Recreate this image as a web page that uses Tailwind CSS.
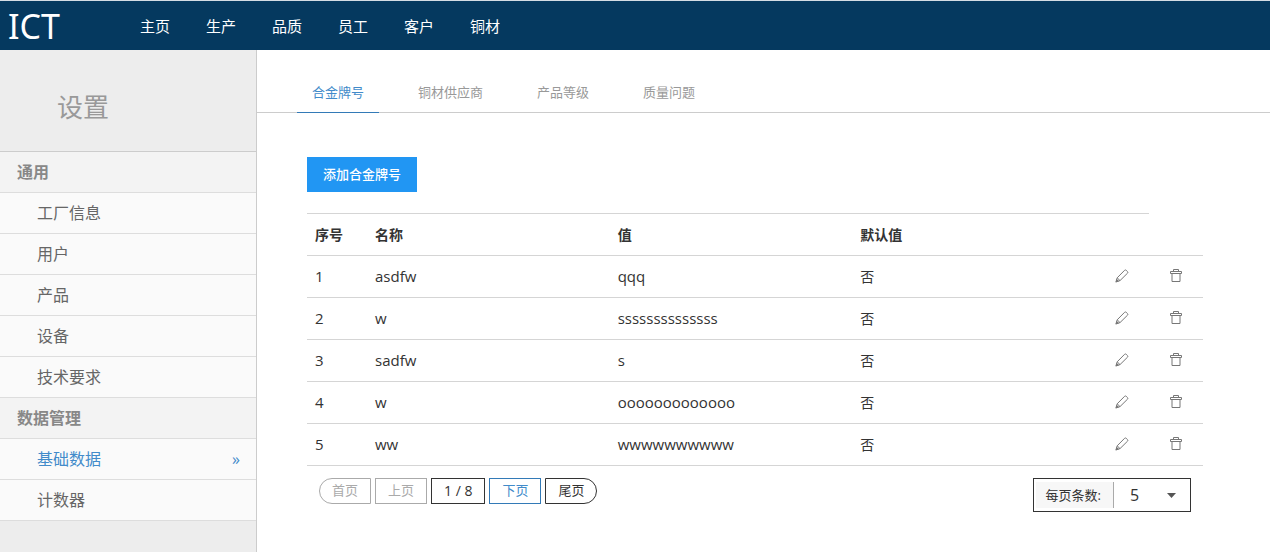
<!DOCTYPE html>
<html lang="zh-CN">
<head>
<meta charset="utf-8">
<meta name="viewport" content="width=device-width, initial-scale=1">
<title>ICT 设置</title>
<script src="https://cdn.jsdelivr.net/npm/@tailwindcss/browser@4"></script>
</head>
<body class="flex min-h-screen flex-col bg-white font-['Open_Sans','Noto_Sans_CJK_SC',sans-serif] text-[#333]">
<svg class="hidden" aria-hidden="true">
  <symbol id="pencil" viewBox="0 0 14 14" fill="none" stroke="currentColor">
    <path d="M2.2 8.8 9.6 1.3Q10.4.6 11.2 1.3L12.5 2.6Q13.2 3.4 12.5 4.2L5 11.6M2.2 8.8 5 11.6M2.2 8.8 1 12.9 5 11.6"/>
    <path d="M1.5 9.800 4 12.300.5 13.500z" fill="currentColor" stroke="none"/>
  </symbol>
  <symbol id="trash" viewBox="0 0 12 14" fill="none" stroke="currentColor">
    <path d="M3.5 2.500v-2h5v2M.5 2.500h11v2H.5zM2 4.500v8h8v-8"/>
  </symbol>
</svg>

<header class="flex h-[50px] shrink-0 items-center border-t border-[#d5dde4] bg-[#05395f] text-white">
  <a href="#" class="w-[124px] pl-2 font-['Noto_Sans',sans-serif] text-[34px] leading-[48px]">ICT</a>
  <nav class="flex text-[15px] leading-6">
    <a href="#" class="w-[66px] pl-4">主页</a>
    <a href="#" class="w-[66px] pl-4">生产</a>
    <a href="#" class="w-[66px] pl-4">品质</a>
    <a href="#" class="w-[66px] pl-4">员工</a>
    <a href="#" class="w-[66px] pl-4">客户</a>
    <a href="#" class="w-[66px] pl-4">铜材</a>
  </nav>
</header>

<div class="flex grow">
  <aside class="w-[257px] shrink-0 border-r border-[#ccc] bg-[#ededed]">
    <h1 class="border-b border-[#ccc] pt-[37px] pb-6 pl-[57px] text-[26px] leading-10 text-[#999]">设置</h1>
    <nav class="text-base leading-10 text-[#666]">
      <h2 class="border-b border-[#ddd] bg-[#f3f3f3] pl-[17px] font-bold text-[#888]">通用</h2>
      <a href="#" class="block border-b border-[#ddd] bg-[#fafafa] pl-[37px]">工厂信息</a>
      <a href="#" class="block border-b border-[#ddd] bg-[#fafafa] pl-[37px]">用户</a>
      <a href="#" class="block border-b border-[#ddd] bg-[#fafafa] pl-[37px]">产品</a>
      <a href="#" class="block border-b border-[#ddd] bg-[#fafafa] pl-[37px]">设备</a>
      <a href="#" class="block border-b border-[#ddd] bg-[#fafafa] pl-[37px]">技术要求</a>
      <h2 class="border-b border-[#ddd] bg-[#f3f3f3] pl-[17px] font-bold text-[#888]">数据管理</h2>
      <a href="#" class="flex justify-between border-b border-[#ddd] bg-[#fafafa] pr-4 pl-[37px] text-[#428bca]" aria-current="page"><span>基础数据</span><span>»</span></a>
      <a href="#" class="block border-b border-[#ddd] bg-[#fafafa] pl-[37px]">计数器</a>
    </nav>
  </aside>

  <main class="min-w-0 grow">
    <nav class="flex gap-6 border-b border-[#ccc] pt-[22px] pl-10 text-[13px] leading-10 text-[#999]">
      <a href="#" class="-mb-px border-b border-[#337ab7] px-[15px] text-[#428bca]" aria-current="page">合金牌号</a>
      <a href="#" class="px-[15px]">铜材供应商</a>
      <a href="#" class="px-[15px]">产品等级</a>
      <a href="#" class="px-[15px]">质量问题</a>
    </nav>

    <section class="pt-11 pr-[67px] pl-[50px]">
      <button type="button" class="block h-[35px] bg-[#2196f3] px-4 text-[13px] font-medium text-white">添加合金牌号</button>

      <table class="mt-[21px] w-full table-fixed border-b border-[#d5d5d5] text-left text-sm">
        <colgroup><col class="w-[60px]"><col><col><col><col class="w-[54px]"><col class="w-[54px]"></colgroup>
        <thead>
          <tr class="h-[42px] *:border-t *:border-[#d5d5d5] *:px-2">
            <th>序号</th><th>名称</th><th>值</th><th>默认值</th><td></td>
          </tr>
        </thead>
        <tbody id="rows"></tbody>
      </table>

      <div class="flex items-start justify-between px-3 pt-3">
        <div class="flex gap-1 text-[13px] *:h-[26px] *:border *:px-3">
          <button type="button" class="rounded-l-full border-[#aaa] text-[#aaa]" disabled>首页</button>
          <button type="button" class="border-[#aaa] text-[#aaa]" disabled>上页</button>
          <span class="border-[#333] text-sm leading-6">1 / 8</span>
          <button type="button" class="border-[#337ab7] text-[#428bca]">下页</button>
          <button type="button" class="rounded-r-full border-[#333]">尾页</button>
        </div>
        <div class="flex h-[34px] border border-[#333] p-0.5">
          <label for="size" class="my-px border-r border-[#aaa] bg-[#f7f7f7] pr-3 pl-2.5 text-[13px] leading-[26px]">每页条数:</label>
          <span class="relative flex items-center">
            <select id="size" class="h-full w-[74px] appearance-none bg-transparent pl-4 text-base leading-6">
              <option>5</option><option>10</option><option>20</option>
            </select>
            <svg class="pointer-events-none absolute right-3 h-[5px] w-[9px] fill-[#555]" viewBox="0 0 9 5" aria-hidden="true"><path d="M0 0h9L4.500 5z"/></svg>
          </span>
        </div>
      </div>
    </section>
  </main>
</div>

<template id="row">
  <tr class="h-[42px] *:border-t *:border-[#d5d5d5] *:px-2">
    <td class="text-[15px]"></td><td class="text-[15px]"></td><td class="text-[15px]"></td><td>否</td>
    <td><button type="button" class="mx-auto block pb-0.5 text-[#777]" aria-label="编辑"><svg class="size-3.5"><use href="#pencil"/></svg></button></td>
    <td><button type="button" class="mx-auto block pb-0.5 text-[#777]" aria-label="删除"><svg class="h-3.5 w-3"><use href="#trash"/></svg></button></td>
  </tr>
</template>
<script>
  const data = [["asdfw", "qqq"], ["w", "ssssssssssssss"], ["sadfw", "s"], ["w", "ooooooooooooo"], ["ww", "wwwwwwwwww"]];
  data.forEach(([name, value], i) => {
    const row = document.getElementById("row").content.cloneNode(true);
    const cells = row.querySelectorAll("td");
    cells[0].textContent = i + 1;
    cells[1].textContent = name;
    cells[2].textContent = value;
    document.getElementById("rows").append(row);
  });
</script>
</body>
</html>
